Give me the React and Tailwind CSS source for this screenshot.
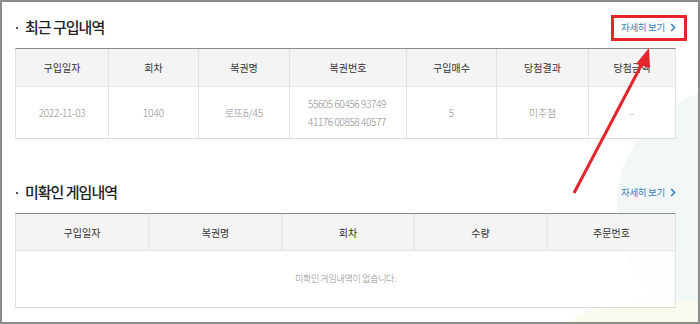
import React from "react";

const font = { fontFamily: '"Noto Sans CJK KR", "Noto Sans", sans-serif' };

function MoreLink() {
  return (
    <a className="flex items-center gap-[5px] text-[9.5px] text-[#3a7fc1] tracking-[-0.3px]">
      자세히 보기
      <svg width="6" height="9" viewBox="0 0 6 9" fill="none">
        <path d="M1.2 1 L4.6 4.5 L1.2 8" stroke="#3a7fc1" strokeWidth="1.6" />
      </svg>
    </a>
  );
}

function Title({ children }) {
  return (
    <div className="flex items-center h-[25px] justify-between">
      <h2 className="flex items-center text-[15px] font-medium text-[#222] tracking-[-1px]">
        <span className="w-[2px] h-[2px] bg-[#555] mr-[7px] ml-[1px]" />
        {children}
      </h2>
      <MoreLink />
    </div>
  );
}

export default function App() {
  const heads1 = ["구입일자", "회차", "복권명", "복권번호", "구입매수", "당첨결과", "당첨금액"];
  const heads2 = ["구입일자", "복권명", "회차", "수량", "주문번호"];

  return (
    <div
      className="relative w-[700px] h-[324px] overflow-hidden bg-white border-2 border-[#8c8c8c]"
      style={font}
    >
      {/* soft background shapes */}
      <svg className="absolute inset-0 pointer-events-none" width="700" height="324">
        <path d="M700 90 C640 110 600 170 620 240 C630 280 660 310 700 320 Z" fill="#f2f8f7" />
        <path d="M560 324 C590 300 640 296 700 300 L700 324 Z" fill="#fbfaef" />
      </svg>

      <div className="relative pl-[13px] pr-[22px] pt-[13px]">
        <Title>최근 구입내역</Title>
        <div className="mt-[8px] border-t border-t-[#8a8a8a] border-x border-x-[#e2e2e2] border-b border-b-[#dcdcdc] bg-white">
          <div className="grid grid-cols-[92px_90px_91px_117px_90px_92px_87px] h-[38px] bg-[#f4f4f4] border-b border-[#e4e4e4]">
            {heads1.map((h, i) => (
              <div
                key={h}
                className={`flex items-center justify-center text-[10px] text-[#333] ${i > 0 ? "border-l border-[#e2e2e2]" : ""}`}
              >
                {h}
              </div>
            ))}
          </div>
          <div className="grid grid-cols-[92px_90px_91px_117px_90px_92px_87px] h-[51px] text-[10px] text-[#8a8a8a] font-light">
            <div className="flex items-center justify-center tracking-[-0.3px]">2022-11-03</div>
            <div className="flex items-center justify-center border-l border-[#e6e6e6]">1040</div>
            <div className="flex items-center justify-center border-l border-[#e6e6e6]">로또6/45</div>
            <div className="flex flex-col justify-center pl-[18px] leading-[18px] border-l border-[#e6e6e6] tracking-[-0.4px]">
              <span>55605 60456 93749</span>
              <span>41176 00858 40577</span>
            </div>
            <div className="flex items-center justify-center border-l border-[#e6e6e6]">5</div>
            <div className="flex items-center justify-center border-l border-[#e6e6e6]">미추첨</div>
            <div className="flex items-center justify-center border-l border-[#e6e6e6]">-</div>
          </div>
        </div>

        <div className="mt-[41px]">
          <Title>미확인 게임내역</Title>
        </div>
        <div className="mt-[8px] border-t border-t-[#8a8a8a] border-x border-x-[#e2e2e2] border-b border-b-[#dcdcdc] bg-white/80">
          <div className="grid grid-cols-[132px_133px_132px_133px_129px] h-[37px] bg-[#f4f4f4] border-b border-[#e4e4e4]">
            {heads2.map((h, i) => (
              <div
                key={h + i}
                className={`flex items-center justify-center text-[10px] text-[#333] ${i > 0 ? "border-l-2 border-[#e8e8e8]" : ""}`}
              >
                {h}
              </div>
            ))}
          </div>
          <div className="h-[56px] flex items-center justify-center text-[9px] text-[#8a8a8a] font-light tracking-[-0.3px]">
            미확인 게임내역이 없습니다.
          </div>
        </div>
      </div>

      {/* annotation overlay */}
      <div className="absolute left-[609px] top-[13px] w-[76px] h-[26px] border-[3px] border-[#e3242b]" />
      <svg className="absolute inset-0 pointer-events-none" width="700" height="324">
        <line x1="572" y1="191" x2="641" y2="60" stroke="#e3242b" strokeWidth="3" />
        <polygon points="647,46 634,62 648,66" fill="#e3242b" />
      </svg>
    </div>
  );
}
